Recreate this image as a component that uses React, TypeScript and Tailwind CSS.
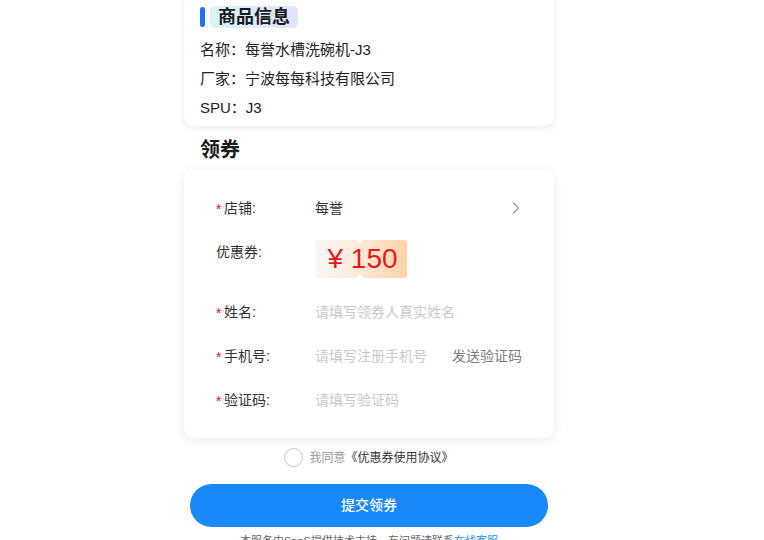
import { ChevronRight } from "lucide-react";

const font = {
  fontFamily: '"Liberation Sans", "Noto Sans CJK SC", sans-serif',
};

function FormRow({
  label,
  required,
  children,
}: {
  label: string;
  required?: boolean;
  children: React.ReactNode;
}) {
  return (
    <div className="flex h-[44px] items-center text-[14px]">
      <div className="relative w-[99px] pl-2 text-[#323233]">
        {required && (
          <span className="absolute left-0 top-[1px] text-[#ee0a24]">*</span>
        )}
        <span>{label}:</span>
      </div>
      <div className="flex flex-1 items-center justify-between">{children}</div>
    </div>
  );
}

function Coupon() {
  return (
    <div className="relative flex h-[38px] w-[92px] items-center justify-center rounded-[3px] bg-gradient-to-r from-[#f8f8f8] via-[#fde9d6] to-[#ffd3a6] pl-[3px]">
      {/* notches */}
      <span className="absolute left-[42px] top-[-3px] h-[6px] w-[6px] rounded-full bg-white" />
      <span className="absolute bottom-[-3px] left-[42px] h-[6px] w-[6px] rounded-full bg-white" />
      <span className="text-[28px] leading-none text-[#e5191f]">¥ 150</span>
    </div>
  );
}

export default function App() {
  return (
    <div className="min-h-[540px] overflow-hidden bg-white" style={font}>
      <div className="ml-[184px] w-[370px]">
        {/* 商品信息 */}
        <div className="mt-[-12px] rounded-[10px] bg-white px-4 pb-[4px] pt-[18px] shadow-[0_2px_10px_rgba(0,0,0,0.09)]">
          <div className="flex h-[22px] items-center">
            <span className="h-[20px] w-[5px] rounded-full bg-[#1a73f5]" />
            <span className="ml-[5px] flex h-[22px] items-center rounded-[5px] bg-gradient-to-r from-[#d8f5fa] to-[#e2e3ff] px-[8px] text-[18px] font-bold text-[#1a1a1a]">
              商品信息
            </span>
          </div>
          <div className="mt-[7px] text-[15px] leading-[29px] text-[#222]">
            <div>名称：每誉水槽洗碗机-J3</div>
            <div>厂家：宁波每每科技有限公司</div>
            <div>SPU：J3</div>
          </div>
        </div>

        {/* 领券 */}
        <div className="flex h-[44px] items-center pl-4 pt-[4px] text-[20px] font-bold text-[#1a1a1a]">
          领券
        </div>

        <div className="rounded-[10px] bg-white px-8 py-4 shadow-[0_2px_12px_rgba(0,0,0,0.09)]">
          <FormRow label="店铺" required>
            <span className="text-[#323233]">每誉</span>
            <ChevronRight className="mr-[-4px] h-[20px] w-[20px] text-[#969799]" strokeWidth={1.4} />
          </FormRow>

          <div className="flex h-[60px] items-start pt-[10px] text-[14px]">
            <div className="w-[99px] pt-[2px] text-[#323233]">优惠券:</div>
            <Coupon />
          </div>

          <FormRow label="姓名" required>
            <span className="text-[#c8c9cc]">请填写领券人真实姓名</span>
          </FormRow>

          <FormRow label="手机号" required>
            <span className="text-[#c8c9cc]">请填写注册手机号</span>
            <span className="text-[#7d7e80]">发送验证码</span>
          </FormRow>

          <FormRow label="验证码" required>
            <span className="text-[#c8c9cc]">请填写验证码</span>
          </FormRow>
        </div>

        {/* agreement */}
        <div className="mt-[10px] flex items-center justify-center text-[12px]">
          <span className="h-[19px] w-[19px] rounded-full border border-[#c8c9cc]" />
          <span className="ml-[6px] text-[#969799]">我同意</span>
          <span className="text-[#323233]">《优惠券使用协议》</span>
        </div>

        <button className="mx-[6px] mt-[17px] flex h-[43px] w-[358px] items-center justify-center rounded-full bg-[#1989fa] text-[14px] font-medium text-white">
          提交领券
        </button>

        <div className="mt-[6px] text-center text-[11px] text-[#646566]">
          本服务由SaaS提供技术支持，有问题请联系<span className="text-[#1989fa]">在线客服</span>
        </div>
      </div>
    </div>
  );
}
